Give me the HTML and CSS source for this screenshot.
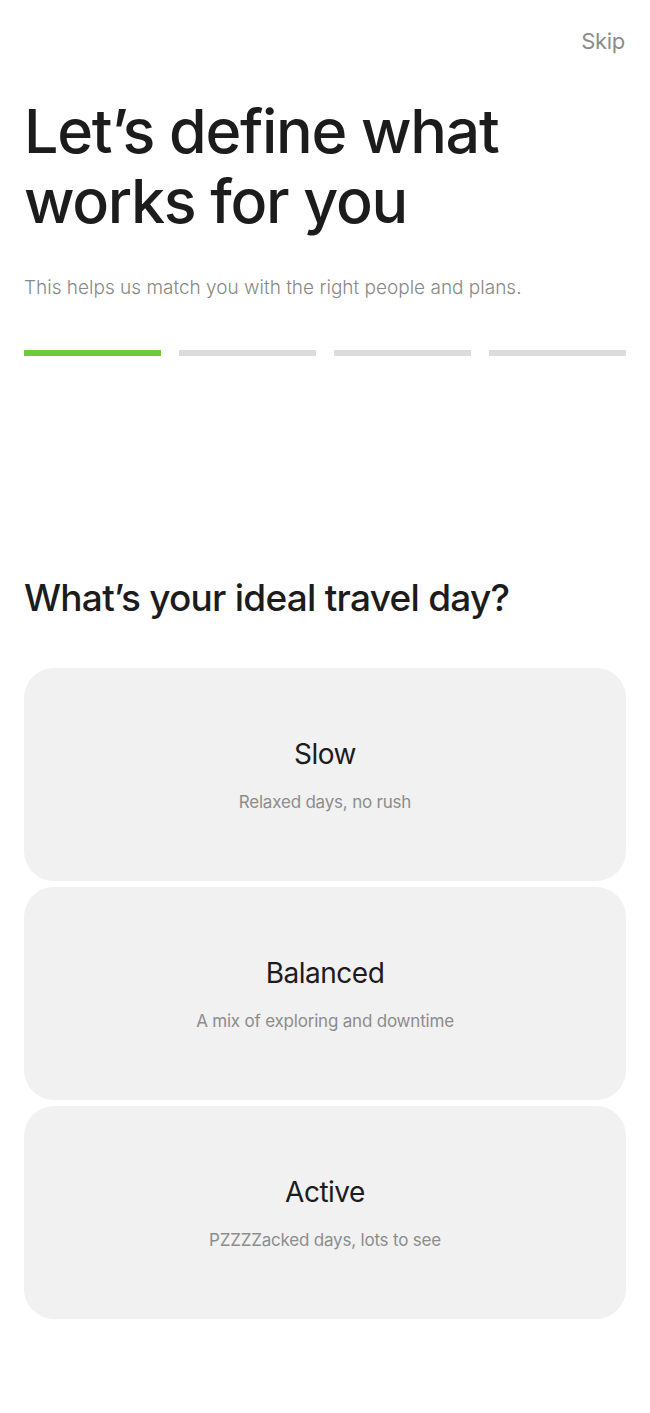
FILE: index.html
```html
<!DOCTYPE html>
<html lang="en">
<head>
<meta charset="utf-8">
<title>Define what works for you</title>
<link rel="stylesheet" href="styles.css">
</head>
<body>
<main class="page">
  <header class="topbar">
    <button class="skip" type="button">Skip</button>
  </header>
  <section class="intro">
    <h1 class="title">Let’s define what works for you</h1>
    <p class="lead">This helps us match you with the right people and plans.</p>
    <div class="progress">
      <span class="seg seg-active"></span>
      <span class="seg"></span>
      <span class="seg"></span>
      <span class="seg"></span>
    </div>
  </section>
  <section class="question">
    <h2 class="q-title">What’s your ideal travel day?</h2>
    <div class="options">
      <button class="option" type="button">
        <span class="opt-title">Slow</span>
        <span class="opt-desc">Relaxed days, no rush</span>
      </button>
      <button class="option" type="button">
        <span class="opt-title">Balanced</span>
        <span class="opt-desc">A mix of exploring and downtime</span>
      </button>
      <button class="option" type="button">
        <span class="opt-title">Active</span>
        <span class="opt-desc">PZZZZacked days, lots to see</span>
      </button>
    </div>
  </section>
</main>
</body>
</html>
```
FILE: styles.css
```css
* { box-sizing: border-box; }
html, body { margin: 0; padding: 0; background: #ffffff; }
body {
  font-family: Inter, "Noto Sans", "Liberation Sans", sans-serif;
  color: #1c1c1c;
}
.page {
  width: 650px;
  padding: 0 24px;
}
.topbar {
  display: flex;
  justify-content: flex-end;
  padding-top: 28px;
}
.skip {
  border: 0;
  background: none;
  padding: 0 1px 0 0;
  font-family: inherit;
  font-size: 22px;
  font-weight: 400;
  line-height: 26px;
  color: #8c8c8c;
  letter-spacing: -0.3px;
}
.intro { padding-top: 42px; }
.title {
  margin: 0;
  font-size: 61px;
  font-weight: 450;
  line-height: 70px;
  letter-spacing: -1.3px;
  color: #1c1c1c;
  max-width: 520px;
}
.lead {
  margin: 40px 0 0;
  font-size: 19px;
  font-weight: 300;
  line-height: 24px;
  color: #888888;
  letter-spacing: 0;
}
.progress {
  display: flex;
  gap: 18px;
  margin-top: 50px;
}
.seg {
  flex: 1;
  height: 6px;
  background: #dcdcdc;
}
.seg-active { background: #6ccb3a; }
.question { padding-top: 219px; }
.q-title {
  margin: 0;
  font-size: 37px;
  font-weight: 450;
  line-height: 46px;
  letter-spacing: -0.75px;
  color: #1c1c1c;
}
.options {
  display: flex;
  flex-direction: column;
  gap: 6px;
  margin-top: 47px;
}
.option {
  display: flex;
  flex-direction: column;
  align-items: center;
  justify-content: center;
  gap: 20px;
  height: 213px;
  border: 0;
  border-radius: 30px;
  background: #f1f1f1;
  font-family: inherit;
  padding: 0 24px;
}
.opt-title {
  font-size: 28px;
  line-height: 34px;
  font-weight: 420;
  color: #1c1c1c;
  letter-spacing: -0.5px;
}
.opt-desc {
  font-size: 17px;
  font-weight: 400;
  line-height: 22px;
  color: #8c8c8c;
  letter-spacing: -0.2px;
}
```
